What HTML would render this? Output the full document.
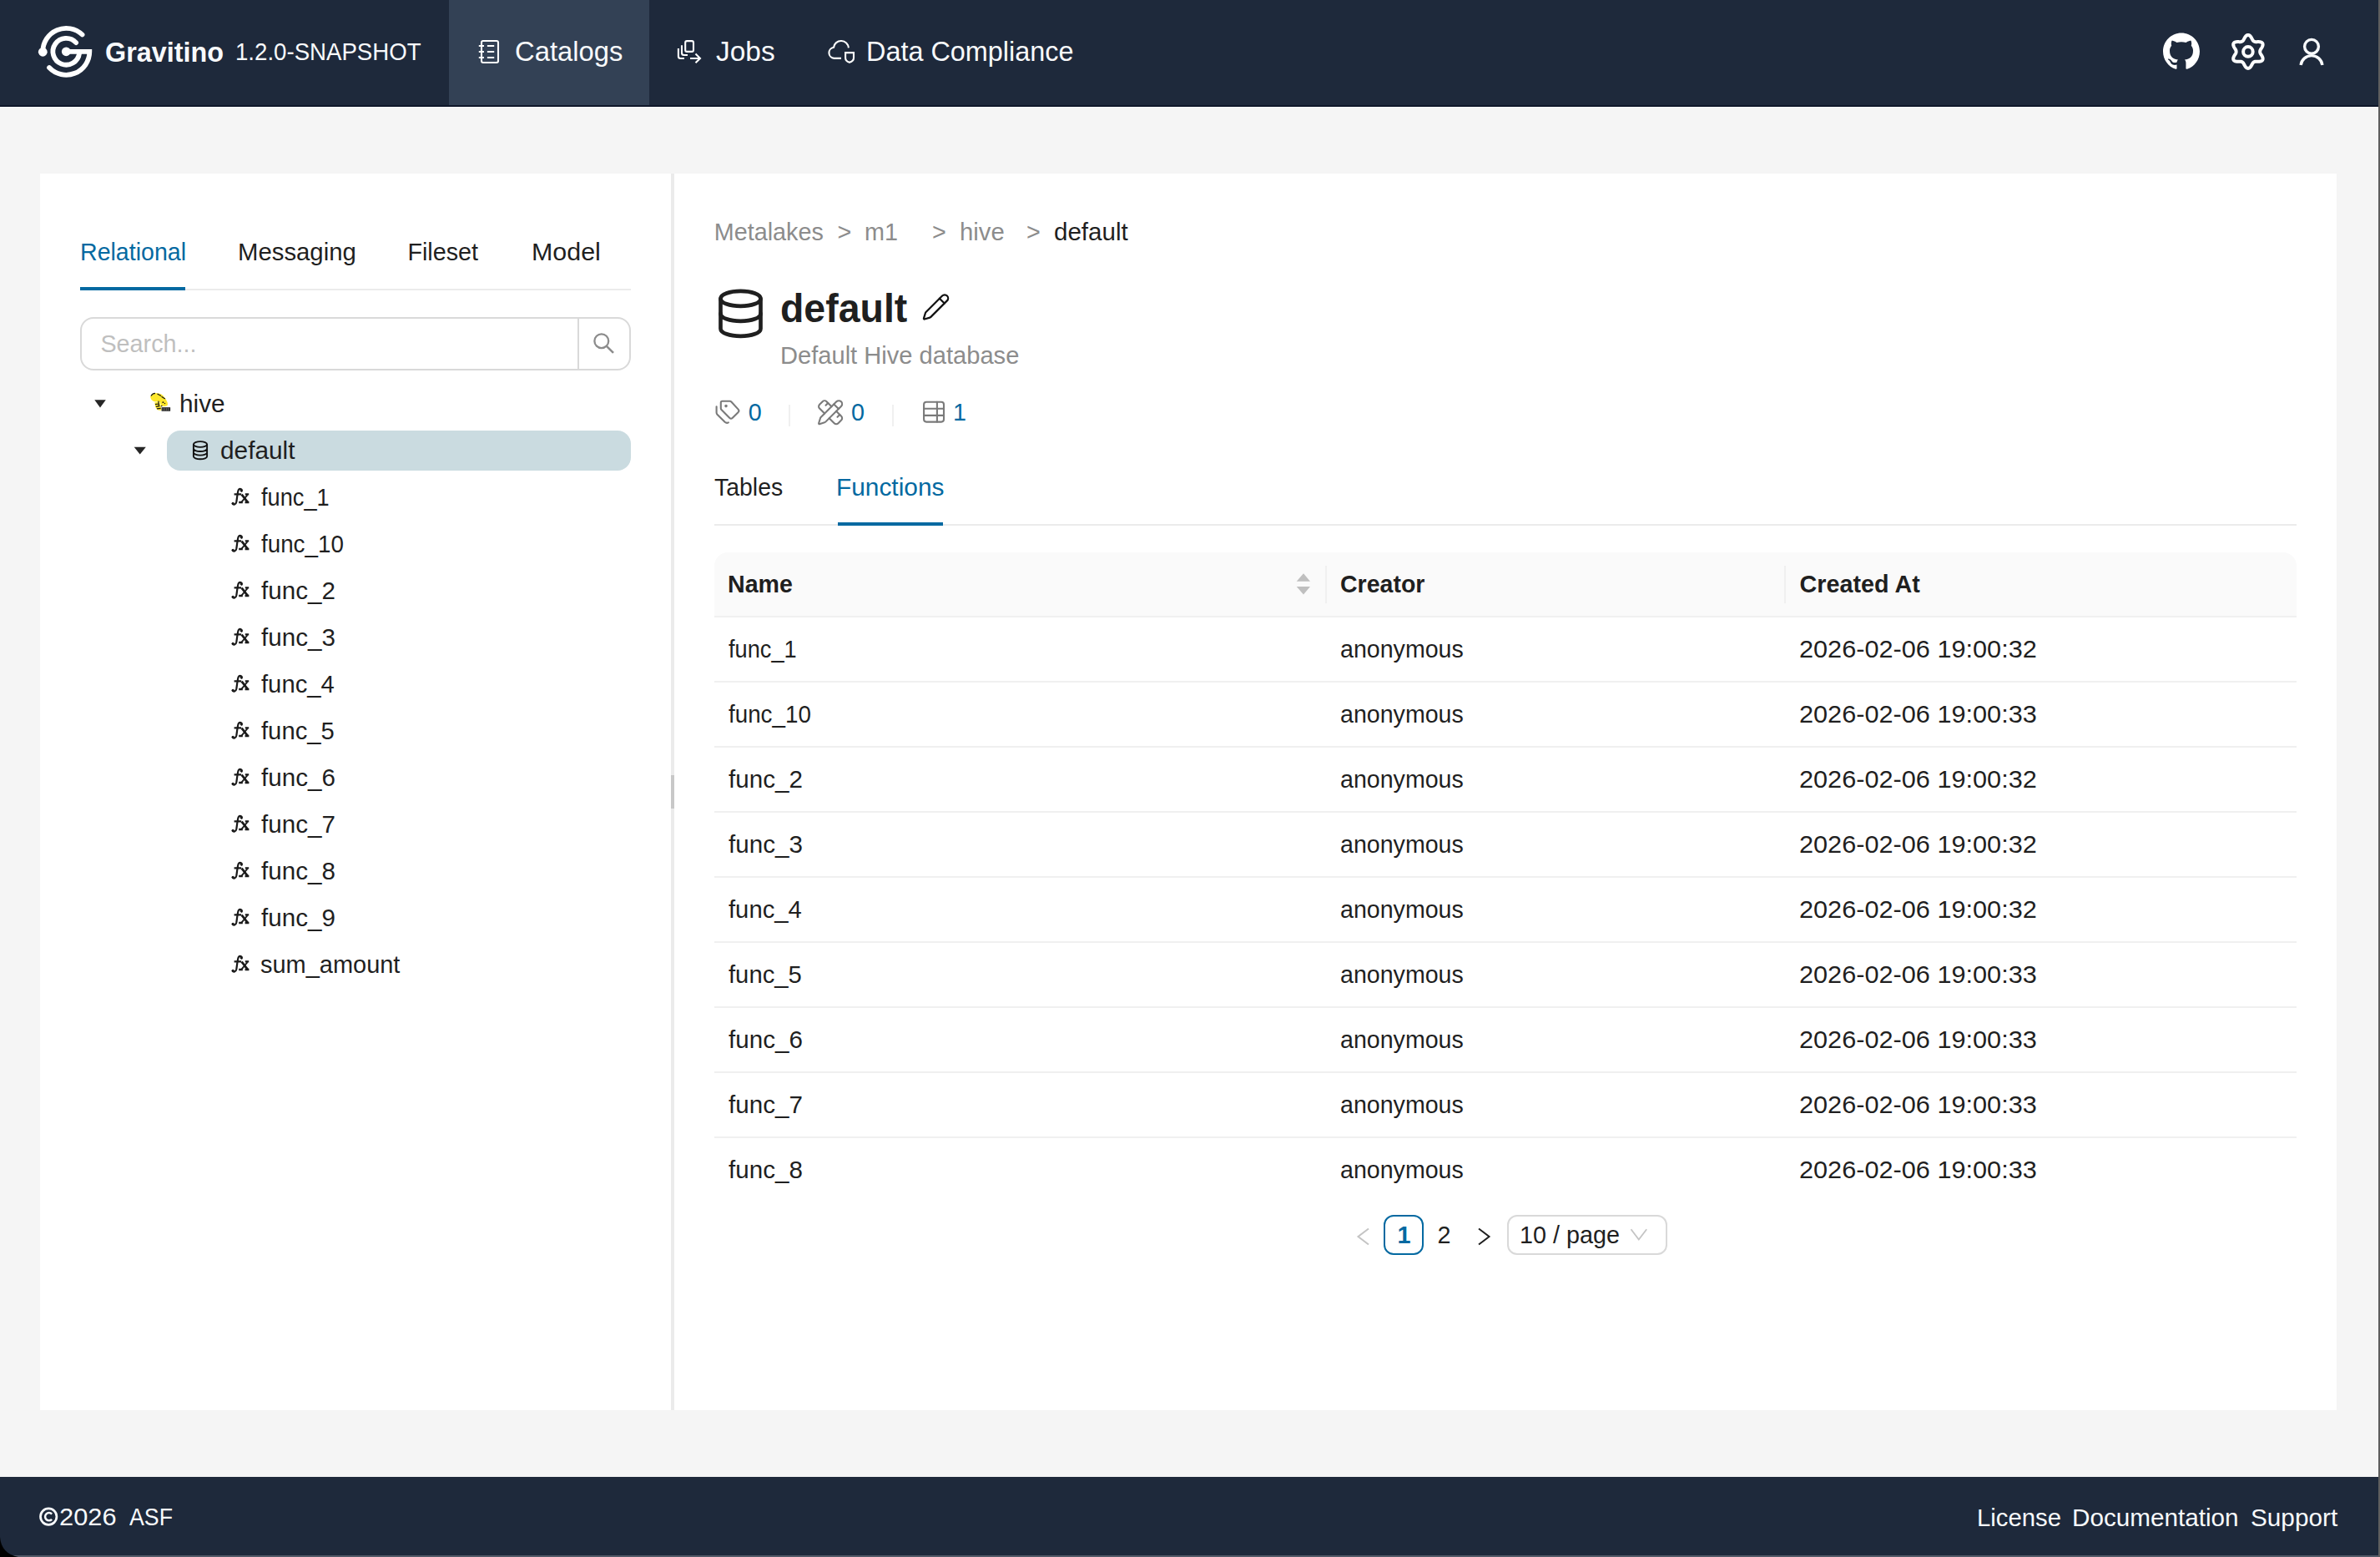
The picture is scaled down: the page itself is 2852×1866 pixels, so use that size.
<!DOCTYPE html>
<html><head><meta charset="utf-8"><style>
*{margin:0;padding:0;box-sizing:border-box}
html,body{width:2852px;height:1866px;overflow:hidden;background:#f5f5f5;font-family:"Liberation Sans",sans-serif}
.a{position:absolute}
.t{position:absolute;white-space:nowrap;line-height:1.117em;transform-origin:0 0}
svg{position:absolute;left:0;top:0}
@media (max-width:2000px){html{zoom:0.5}}
</style></head>
<body>
<div class="a" style="left:0px;top:0px;width:2852px;height:126px;background:#1e293b;"></div>
<div class="a" style="left:538px;top:0px;width:240px;height:126px;background:#334155;"></div>
<div class="a" style="left:0px;top:126px;width:2852px;height:2px;background:#0f172a;"></div>
<div class="a" style="left:0px;top:128px;width:2852px;height:1px;background:#fbfbfb;"></div>
<div class="a" style="left:48px;top:208px;width:2752px;height:1482px;background:#ffffff;"></div>
<div class="a" style="left:804px;top:208px;width:4px;height:1482px;background:#ebebeb;"></div>
<div class="a" style="left:804px;top:929px;width:4px;height:40px;background:#c8c8c8;"></div>
<div class="a" style="left:96px;top:346px;width:660px;height:2px;background:#ebebeb;"></div>
<div class="a" style="left:96px;top:344px;width:126px;height:4px;background:#0369a1;"></div>
<div class="a" style="left:96px;top:380px;width:660px;height:64px;background:#fff;border:2px solid #d9d9d9;border-radius:16px"></div>
<div class="a" style="left:692px;top:380px;width:2px;height:64px;background:#d9d9d9;"></div>
<div class="a" style="left:200px;top:516px;width:556px;height:48px;background:#cadbe0;border-radius:16px"></div>
<div class="a" style="left:856px;top:628px;width:1896px;height:2px;background:#ebebeb;"></div>
<div class="a" style="left:1004px;top:626px;width:126px;height:4px;background:#0369a1;"></div>
<div class="a" style="left:945px;top:485px;width:2px;height:26px;background:#f0f0f0;"></div>
<div class="a" style="left:1069px;top:485px;width:2px;height:26px;background:#f0f0f0;"></div>
<div class="a" style="left:856px;top:662px;width:1896px;height:76px;background:#fafafa;border-radius:16px 16px 0 0"></div>
<div class="a" style="left:856px;top:738px;width:1896px;height:2px;background:#f0f0f0;"></div>
<div class="a" style="left:1588px;top:678px;width:2px;height:45px;background:#f0f0f0;"></div>
<div class="a" style="left:2138px;top:678px;width:2px;height:45px;background:#f0f0f0;"></div>
<div class="a" style="left:856px;top:816px;width:1896px;height:2px;background:#f0f0f0;"></div>
<div class="a" style="left:856px;top:894px;width:1896px;height:2px;background:#f0f0f0;"></div>
<div class="a" style="left:856px;top:972px;width:1896px;height:2px;background:#f0f0f0;"></div>
<div class="a" style="left:856px;top:1050px;width:1896px;height:2px;background:#f0f0f0;"></div>
<div class="a" style="left:856px;top:1128px;width:1896px;height:2px;background:#f0f0f0;"></div>
<div class="a" style="left:856px;top:1206px;width:1896px;height:2px;background:#f0f0f0;"></div>
<div class="a" style="left:856px;top:1284px;width:1896px;height:2px;background:#f0f0f0;"></div>
<div class="a" style="left:856px;top:1362px;width:1896px;height:2px;background:#f0f0f0;"></div>
<div class="a" style="left:1658px;top:1456px;width:48px;height:48px;background:#fff;border:2px solid #0369a1;border-radius:12px"></div>
<div class="a" style="left:1806px;top:1456px;width:192px;height:48px;background:#fff;border:2px solid #d9d9d9;border-radius:12px"></div>
<div class="a" style="left:0px;top:1770px;width:2852px;height:96px;background:#1e293b;"></div>
<div class="a" style="left:0px;top:1864px;width:2852px;height:2px;background:#535a68;"></div>
<div class="a" style="left:2850px;top:0px;width:2px;height:1866px;background:#5e5e5e;"></div>
<div class="t" style="left:126.22px;top:44.56px;font-size:32.75px;color:#f8fafc;transform:scaleX(0.9877);font-weight:700">Gravitino</div>
<div class="t" style="left:281.89px;top:45.98px;font-size:28.75px;color:#f8fafc;transform:scaleX(0.9609)">1.2.0-SNAPSHOT</div>
<div class="t" style="left:617.11px;top:44.46px;font-size:32.75px;color:#f8fafc">Catalogs</div>
<div class="t" style="left:857.69px;top:44.46px;font-size:32.75px;color:#f8fafc;transform:scaleX(1.0215)">Jobs</div>
<div class="t" style="left:1038.05px;top:44.46px;font-size:32.75px;color:#f8fafc;transform:scaleX(0.9892)">Data Compliance</div>
<div class="t" style="left:95.63px;top:285.98px;font-size:28.75px;color:#0369a1;transform:scaleX(0.9934)">Relational</div>
<div class="t" style="left:284.68px;top:285.98px;font-size:28.75px;color:#1f1f1f;transform:scaleX(1.0197)">Messaging</div>
<div class="t" style="left:488.41px;top:285.98px;font-size:28.75px;color:#1f1f1f">Fileset</div>
<div class="t" style="left:637.10px;top:285.98px;font-size:28.75px;color:#1f1f1f;transform:scaleX(1.0578)">Model</div>
<div class="t" style="left:120.41px;top:396.18px;font-size:28.75px;color:#bfbfbf">Search...</div>
<div class="t" style="left:214.95px;top:467.98px;font-size:28.75px;color:#1f1f1f;transform:scaleX(1.0348)">hive</div>
<div class="t" style="left:263.97px;top:523.98px;font-size:28.75px;color:#1f1f1f;transform:scaleX(1.0361)">default</div>
<div class="t" style="left:313.00px;top:579.98px;font-size:28.75px;color:#1f1f1f;transform:scaleX(0.9458)">func_1</div>
<div class="t" style="left:313.00px;top:635.98px;font-size:28.75px;color:#1f1f1f;transform:scaleX(0.9660)">func_10</div>
<div class="t" style="left:313.00px;top:691.98px;font-size:28.75px;color:#1f1f1f;transform:scaleX(1.0291)">func_2</div>
<div class="t" style="left:313.00px;top:747.98px;font-size:28.75px;color:#1f1f1f;transform:scaleX(1.0291)">func_3</div>
<div class="t" style="left:313.00px;top:803.98px;font-size:28.75px;color:#1f1f1f;transform:scaleX(1.0168)">func_4</div>
<div class="t" style="left:313.00px;top:859.98px;font-size:28.75px;color:#1f1f1f;transform:scaleX(1.0168)">func_5</div>
<div class="t" style="left:313.00px;top:915.98px;font-size:28.75px;color:#1f1f1f;transform:scaleX(1.0291)">func_6</div>
<div class="t" style="left:313.00px;top:971.98px;font-size:28.75px;color:#1f1f1f;transform:scaleX(1.0291)">func_7</div>
<div class="t" style="left:313.00px;top:1027.98px;font-size:28.75px;color:#1f1f1f;transform:scaleX(1.0291)">func_8</div>
<div class="t" style="left:313.00px;top:1083.98px;font-size:28.75px;color:#1f1f1f;transform:scaleX(1.0291)">func_9</div>
<div class="t" style="left:312.00px;top:1139.98px;font-size:28.75px;color:#1f1f1f;transform:scaleX(1.0072)">sum_amount</div>
<div class="t" style="left:855.82px;top:261.78px;font-size:28.75px;color:#8c8c8c">Metalakes</div>
<div class="t" style="left:1003.41px;top:261.78px;font-size:28.75px;color:#8c8c8c">&gt;</div>
<div class="t" style="left:1036.01px;top:261.78px;font-size:28.75px;color:#8c8c8c">m1</div>
<div class="t" style="left:1116.91px;top:261.78px;font-size:28.75px;color:#8c8c8c">&gt;</div>
<div class="t" style="left:1149.68px;top:261.78px;font-size:28.75px;color:#8c8c8c;transform:scaleX(1.0186)">hive</div>
<div class="t" style="left:1230.01px;top:261.78px;font-size:28.75px;color:#8c8c8c">&gt;</div>
<div class="t" style="left:1263.48px;top:261.78px;font-size:28.75px;color:#1f1f1f;transform:scaleX(1.0279)">default</div>
<div class="t" style="left:935.06px;top:342.71px;font-size:47.5px;color:#1f1f1f;transform:scaleX(0.9779);font-weight:700">default</div>
<div class="t" style="left:934.99px;top:409.98px;font-size:28.75px;color:#8c8c8c;transform:scaleX(1.0122)">Default Hive database</div>
<div class="t" style="left:896.71px;top:477.98px;font-size:28.75px;color:#0369a1">0</div>
<div class="t" style="left:1020.11px;top:477.98px;font-size:28.75px;color:#0369a1">0</div>
<div class="t" style="left:1142.01px;top:477.78px;font-size:28.75px;color:#0369a1">1</div>
<div class="t" style="left:855.82px;top:568.48px;font-size:28.75px;color:#1f1f1f;transform:scaleX(0.9885)">Tables</div>
<div class="t" style="left:1001.94px;top:568.48px;font-size:28.75px;color:#0369a1;transform:scaleX(1.0383)">Functions</div>
<div class="t" style="left:871.93px;top:683.88px;font-size:28.75px;color:#1f1f1f;transform:scaleX(0.9950);font-weight:700">Name</div>
<div class="t" style="left:1606.22px;top:683.88px;font-size:28.75px;color:#1f1f1f;transform:scaleX(0.9916);font-weight:700">Creator</div>
<div class="t" style="left:2156.51px;top:683.88px;font-size:28.75px;color:#1f1f1f;font-weight:700">Created At</div>
<div class="t" style="left:872.60px;top:761.58px;font-size:28.75px;color:#1f1f1f;transform:scaleX(0.9458)">func_1</div>
<div class="t" style="left:1606.21px;top:761.58px;font-size:28.75px;color:#1f1f1f;transform:scaleX(0.9943)">anonymous</div>
<div class="t" style="left:2156.44px;top:761.58px;font-size:28.75px;color:#1f1f1f;transform:scaleX(1.0668)">2026-02-06 19:00:32</div>
<div class="t" style="left:872.60px;top:839.58px;font-size:28.75px;color:#1f1f1f;transform:scaleX(0.9660)">func_10</div>
<div class="t" style="left:1606.21px;top:839.58px;font-size:28.75px;color:#1f1f1f;transform:scaleX(0.9943)">anonymous</div>
<div class="t" style="left:2156.44px;top:839.58px;font-size:28.75px;color:#1f1f1f;transform:scaleX(1.0668)">2026-02-06 19:00:33</div>
<div class="t" style="left:872.60px;top:917.58px;font-size:28.75px;color:#1f1f1f;transform:scaleX(1.0291)">func_2</div>
<div class="t" style="left:1606.21px;top:917.58px;font-size:28.75px;color:#1f1f1f;transform:scaleX(0.9943)">anonymous</div>
<div class="t" style="left:2156.44px;top:917.58px;font-size:28.75px;color:#1f1f1f;transform:scaleX(1.0668)">2026-02-06 19:00:32</div>
<div class="t" style="left:872.60px;top:995.58px;font-size:28.75px;color:#1f1f1f;transform:scaleX(1.0291)">func_3</div>
<div class="t" style="left:1606.21px;top:995.58px;font-size:28.75px;color:#1f1f1f;transform:scaleX(0.9943)">anonymous</div>
<div class="t" style="left:2156.44px;top:995.58px;font-size:28.75px;color:#1f1f1f;transform:scaleX(1.0668)">2026-02-06 19:00:32</div>
<div class="t" style="left:872.60px;top:1073.58px;font-size:28.75px;color:#1f1f1f;transform:scaleX(1.0168)">func_4</div>
<div class="t" style="left:1606.21px;top:1073.58px;font-size:28.75px;color:#1f1f1f;transform:scaleX(0.9943)">anonymous</div>
<div class="t" style="left:2156.44px;top:1073.58px;font-size:28.75px;color:#1f1f1f;transform:scaleX(1.0668)">2026-02-06 19:00:32</div>
<div class="t" style="left:872.60px;top:1151.58px;font-size:28.75px;color:#1f1f1f;transform:scaleX(1.0168)">func_5</div>
<div class="t" style="left:1606.21px;top:1151.58px;font-size:28.75px;color:#1f1f1f;transform:scaleX(0.9943)">anonymous</div>
<div class="t" style="left:2156.44px;top:1151.58px;font-size:28.75px;color:#1f1f1f;transform:scaleX(1.0668)">2026-02-06 19:00:33</div>
<div class="t" style="left:872.60px;top:1229.58px;font-size:28.75px;color:#1f1f1f;transform:scaleX(1.0291)">func_6</div>
<div class="t" style="left:1606.21px;top:1229.58px;font-size:28.75px;color:#1f1f1f;transform:scaleX(0.9943)">anonymous</div>
<div class="t" style="left:2156.44px;top:1229.58px;font-size:28.75px;color:#1f1f1f;transform:scaleX(1.0668)">2026-02-06 19:00:33</div>
<div class="t" style="left:872.60px;top:1307.58px;font-size:28.75px;color:#1f1f1f;transform:scaleX(1.0291)">func_7</div>
<div class="t" style="left:1606.21px;top:1307.58px;font-size:28.75px;color:#1f1f1f;transform:scaleX(0.9943)">anonymous</div>
<div class="t" style="left:2156.44px;top:1307.58px;font-size:28.75px;color:#1f1f1f;transform:scaleX(1.0668)">2026-02-06 19:00:33</div>
<div class="t" style="left:872.60px;top:1385.58px;font-size:28.75px;color:#1f1f1f;transform:scaleX(1.0291)">func_8</div>
<div class="t" style="left:1606.21px;top:1385.58px;font-size:28.75px;color:#1f1f1f;transform:scaleX(0.9943)">anonymous</div>
<div class="t" style="left:2156.44px;top:1385.58px;font-size:28.75px;color:#1f1f1f;transform:scaleX(1.0668)">2026-02-06 19:00:33</div>
<div class="t" style="left:1674.41px;top:1463.98px;font-size:28.75px;color:#0369a1;font-weight:700">1</div>
<div class="t" style="left:1722.41px;top:1463.98px;font-size:28.75px;color:#1f1f1f">2</div>
<div class="t" style="left:1821.12px;top:1464.08px;font-size:28.75px;color:#1f1f1f">10 / page</div>
<div class="t" style="left:71.04px;top:1802.08px;font-size:28.75px;color:#f8fafc;transform:scaleX(1.0713)">2026</div>
<div class="t" style="left:155.40px;top:1802.08px;font-size:28.75px;color:#f8fafc;transform:scaleX(0.9298)">ASF</div>
<div class="t" style="left:2368.68px;top:1802.58px;font-size:28.75px;color:#f8fafc;transform:scaleX(1.0189)">License</div>
<div class="t" style="left:2483.45px;top:1802.58px;font-size:28.75px;color:#f8fafc;transform:scaleX(1.0318)">Documentation</div>
<div class="t" style="left:2697.37px;top:1802.58px;font-size:28.75px;color:#f8fafc;transform:scaleX(1.0342)">Support</div>
<svg width="2852" height="1866" viewBox="0 0 2852 1866"><path d="M98.57 41.49 A28.0 28.0 0 0 0 51.30 61.80" fill="none" stroke="#fff" stroke-width="5.8" stroke-linecap="round"/><circle cx="51.3" cy="62.3" r="5.4" fill="#fff"/><path d="M58.99 81.07 A28.0 28.0 0 0 0 107.30 61.80 L79.3 61.8" fill="none" stroke="#fff" stroke-width="5.8" stroke-linecap="round" stroke-linejoin="miter"/><path d="M91.12 51.16 A15.9 15.9 0 1 0 95.05 64.01" fill="none" stroke="#fff" stroke-width="5.8" stroke-linecap="round"/><circle cx="79.3" cy="61.8" r="5.4" fill="#fff"/><rect x="577" y="49" width="20" height="26" rx="2" fill="none" stroke="#fff" stroke-width="2.1" stroke-linecap="butt"/><path d="M573.8 55H580M583.9 55H592.2" fill="none" stroke="#fff" stroke-width="2.1" stroke-linecap="butt"/><path d="M573.8 62H580M583.9 62H592.2" fill="none" stroke="#fff" stroke-width="2.1" stroke-linecap="butt"/><path d="M573.8 69H580M583.9 69H592.2" fill="none" stroke="#fff" stroke-width="2.1" stroke-linecap="butt"/><rect x="821.2" y="49.1" width="9.8" height="12.8" rx="2" fill="none" stroke="#fff" stroke-width="2.1" stroke-linecap="butt"/><path d="M817 54.2V63.5a2.5 2.5 0 0 0 2.5 2.5H824" fill="none" stroke="#fff" stroke-width="2.1" stroke-linecap="butt"/><path d="M812.9 58V67.5a2.5 2.5 0 0 0 2.5 2.5H820" fill="none" stroke="#fff" stroke-width="2.1" stroke-linecap="butt"/><path d="M827 70H839M833.5 64.6L839 70L833.5 75.3" fill="none" stroke="#fff" stroke-width="2.1" stroke-linecap="butt" stroke-linejoin="miter"/><path d="M1008 69.9H999.5a6.6 6.6 0 0 1 -0.5 -13.1A9 9 0 0 1 1016.9 57.3" fill="none" stroke="#fff" stroke-width="2.1" stroke-linecap="butt" stroke-linecap="butt"/><path d="M1013.1 63.1H1023V69.5Q1023 73.2 1018 74.8Q1013.1 73.2 1013.1 69.5Z" fill="none" stroke="#fff" stroke-width="2.1" stroke-linecap="butt" stroke-linejoin="miter"/><path transform="translate(2592 39.6) scale(0.4503)" d="M48.854 0C21.839 0 0 22 0 49.217c0 21.756 13.993 40.172 33.405 46.69 2.427.49 3.316-1.059 3.316-2.362 0-1.141-.08-5.052-.08-9.127-13.59 2.934-16.42-5.867-16.42-5.867-2.184-5.704-5.42-7.17-5.42-7.17-4.448-3.015.324-3.015.324-3.015 4.934.326 7.523 5.052 7.523 5.052 4.367 7.496 11.404 5.378 14.235 4.074.404-3.178 1.699-5.378 3.074-6.6-10.839-1.141-22.243-5.378-22.243-24.283 0-5.378 1.94-9.778 5.014-13.2-.485-1.222-2.184-6.275.486-13.038 0 0 4.125-1.304 13.426 5.052a46.97 46.97 0 0 1 12.214-1.63c4.125 0 8.33.571 12.213 1.63 9.302-6.356 13.427-5.052 13.427-5.052 2.67 6.763.97 11.816.485 13.038 3.155 3.422 5.015 7.822 5.015 13.2 0 18.905-11.404 23.06-22.324 24.283 1.78 1.548 3.316 4.481 3.316 9.126 0 6.6-.08 11.897-.08 13.526 0 1.304.89 2.853 3.316 2.364 19.412-6.52 33.405-24.935 33.405-46.691C97.707 22 75.788 0 48.854 0z" fill="#fff"/><path d="M2708.20 61.90 L2708.20 62.27 L2708.24 62.65 L2708.31 63.03 L2708.42 63.43 L2708.59 63.83 L2708.81 64.26 L2709.07 64.71 L2709.36 65.19 L2709.69 65.69 L2710.03 66.22 L2710.37 66.78 L2710.69 67.36 L2710.99 67.95 L2711.24 68.56 L2711.43 69.16 L2711.56 69.76 L2711.60 70.34 L2711.57 70.90 L2711.44 71.42 L2711.22 71.90 L2710.92 72.33 L2710.53 72.70 L2710.06 73.01 L2709.54 73.26 L2708.96 73.45 L2708.33 73.59 L2707.68 73.67 L2707.02 73.71 L2706.36 73.72 L2705.71 73.71 L2705.08 73.68 L2704.48 73.65 L2703.92 73.63 L2703.40 73.63 L2702.92 73.65 L2702.48 73.71 L2702.08 73.81 L2701.72 73.94 L2701.38 74.10 L2701.05 74.28 L2700.73 74.48 L2700.42 74.69 L2700.12 74.94 L2699.84 75.24 L2699.57 75.59 L2699.31 75.99 L2699.05 76.44 L2698.79 76.94 L2698.51 77.47 L2698.22 78.03 L2697.91 78.60 L2697.57 79.17 L2697.20 79.72 L2696.81 80.24 L2696.38 80.71 L2695.92 81.12 L2695.44 81.45 L2694.94 81.70 L2694.42 81.85 L2693.90 81.90 L2693.38 81.85 L2692.86 81.70 L2692.36 81.45 L2691.88 81.12 L2691.42 80.71 L2690.99 80.24 L2690.60 79.72 L2690.23 79.17 L2689.89 78.60 L2689.58 78.03 L2689.29 77.47 L2689.01 76.94 L2688.75 76.44 L2688.49 75.99 L2688.23 75.59 L2687.96 75.24 L2687.68 74.94 L2687.38 74.69 L2687.07 74.48 L2686.75 74.28 L2686.42 74.10 L2686.08 73.94 L2685.72 73.81 L2685.32 73.71 L2684.88 73.65 L2684.40 73.63 L2683.88 73.63 L2683.32 73.65 L2682.72 73.68 L2682.09 73.71 L2681.44 73.72 L2680.78 73.71 L2680.12 73.67 L2679.47 73.59 L2678.84 73.45 L2678.26 73.26 L2677.74 73.01 L2677.27 72.70 L2676.88 72.33 L2676.58 71.90 L2676.36 71.42 L2676.23 70.90 L2676.20 70.34 L2676.24 69.76 L2676.37 69.16 L2676.56 68.56 L2676.81 67.95 L2677.11 67.36 L2677.43 66.78 L2677.77 66.22 L2678.11 65.69 L2678.44 65.19 L2678.73 64.71 L2678.99 64.26 L2679.21 63.83 L2679.38 63.43 L2679.49 63.03 L2679.56 62.65 L2679.60 62.27 L2679.60 61.90 L2679.60 61.53 L2679.56 61.15 L2679.49 60.77 L2679.38 60.37 L2679.21 59.97 L2678.99 59.54 L2678.73 59.09 L2678.44 58.61 L2678.11 58.11 L2677.77 57.58 L2677.43 57.02 L2677.11 56.44 L2676.81 55.85 L2676.56 55.24 L2676.37 54.64 L2676.24 54.04 L2676.20 53.46 L2676.23 52.90 L2676.36 52.38 L2676.58 51.90 L2676.88 51.47 L2677.27 51.10 L2677.74 50.79 L2678.26 50.54 L2678.84 50.35 L2679.47 50.21 L2680.12 50.13 L2680.78 50.09 L2681.44 50.08 L2682.09 50.09 L2682.72 50.12 L2683.32 50.15 L2683.88 50.17 L2684.40 50.17 L2684.88 50.15 L2685.32 50.09 L2685.72 49.99 L2686.08 49.86 L2686.42 49.70 L2686.75 49.52 L2687.07 49.32 L2687.38 49.11 L2687.68 48.86 L2687.96 48.56 L2688.23 48.21 L2688.49 47.81 L2688.75 47.36 L2689.01 46.86 L2689.29 46.33 L2689.58 45.77 L2689.89 45.20 L2690.23 44.63 L2690.60 44.08 L2690.99 43.56 L2691.42 43.09 L2691.88 42.68 L2692.36 42.35 L2692.86 42.10 L2693.38 41.95 L2693.90 41.90 L2694.42 41.95 L2694.94 42.10 L2695.44 42.35 L2695.92 42.68 L2696.38 43.09 L2696.81 43.56 L2697.20 44.08 L2697.57 44.63 L2697.91 45.20 L2698.22 45.77 L2698.51 46.33 L2698.79 46.86 L2699.05 47.36 L2699.31 47.81 L2699.57 48.21 L2699.84 48.56 L2700.12 48.86 L2700.42 49.11 L2700.73 49.32 L2701.05 49.52 L2701.38 49.70 L2701.72 49.86 L2702.08 49.99 L2702.48 50.09 L2702.92 50.15 L2703.40 50.17 L2703.92 50.17 L2704.48 50.15 L2705.08 50.12 L2705.71 50.09 L2706.36 50.08 L2707.02 50.09 L2707.68 50.13 L2708.33 50.21 L2708.96 50.35 L2709.54 50.54 L2710.06 50.79 L2710.53 51.10 L2710.92 51.47 L2711.22 51.90 L2711.44 52.38 L2711.57 52.90 L2711.60 53.46 L2711.56 54.04 L2711.43 54.64 L2711.24 55.24 L2710.99 55.85 L2710.69 56.44 L2710.37 57.02 L2710.03 57.58 L2709.69 58.11 L2709.36 58.61 L2709.07 59.09 L2708.81 59.54 L2708.59 59.97 L2708.42 60.37 L2708.31 60.77 L2708.24 61.15 L2708.20 61.53 L2708.20 61.90Z" fill="none" stroke="#fff" stroke-width="4" stroke-linejoin="round"/><circle cx="2693.9" cy="61.9" r="5.8" fill="none" stroke="#fff" stroke-width="4"/><circle cx="2770" cy="55.8" r="8.4" fill="none" stroke="#f8fafc" stroke-width="3.4"/><path d="M2757.1 78A13 13 0 0 1 2782.9 78" fill="none" stroke="#f8fafc" stroke-width="3.4"/><circle cx="720.8" cy="408.7" r="8.4" fill="none" stroke="#8c8c8c" stroke-width="2.3"/><path d="M726.9 414.8L735 422.9" stroke="#8c8c8c" stroke-width="2.6"/><path d="M113.3 479.3H126.8L120 488.4Z" fill="#262626"/><path d="M160.7 535.8H174.8L167.7 544.5Z" fill="#262626"/><path d="M180.3 475 Q181.5 471 186 470.9 L190.5 471.4 Q193.5 472 195.5 474.2 L198.3 477.8 Q199.8 480.2 200.8 482.8 L200.9 485.6 Q199.8 487 197 486.9 L193.6 486.6 Q192.3 484.3 191.6 482 L188.8 481.6 Q186 481.6 184 481 Q180.8 479.6 180.3 476.5Z" fill="#fde72a"/><path d="M185.3 482.6 L190.6 481.8 Q192.6 485 193.2 488.3 L193.4 491.6 Q190.2 492.2 187.6 490.2 Q185.6 487.2 185.3 482.6Z" fill="#fde72a"/><path d="M181 474.6 Q182.3 471.5 186 471.3 M188.5 472 L193 474.5 M193.5 475.2 L197.8 478 M189.8 480.6 L190.6 487 M186 484.6 L189.8 484 M186.8 487.3 L191.3 486.6 M188 489.9 L192.6 489.3 M192.8 486.9 L194.5 486.3" stroke="#151515" stroke-width="1.2" fill="none"/><circle cx="195.4" cy="482.2" r="0.9" fill="#111"/><circle cx="197.5" cy="483.5" r="0.7" fill="#111"/><rect x="193.6" y="488.2" width="10.5" height="4.5" fill="#1a1a1a"/><path d="M195.3 489v3M197.6 489v3M199.8 489v3M202 489v3" stroke="#9a9a9a" stroke-width="0.7"/><ellipse cx="240" cy="532.5" rx="8.1" ry="3.4" fill="none" stroke="#111" stroke-width="1.9"/><path d="M231.9 532.5V546.9A8.1 3.4 0 0 0 248.1 546.9V532.5M231.9 537.6A8.1 3.4 0 0 0 248.1 537.6M231.9 542.2A8.1 3.4 0 0 0 248.1 542.2" fill="none" stroke="#111" stroke-width="1.9"/><g transform="translate(0 0)" fill="none" stroke="#1a1a1a" stroke-width="2.2" stroke-linecap="round"><path d="M289.6 588.6 C290.2 585.8 287 584.8 285.6 587.6 C284.6 590 284.2 596 283.3 601.5 C282.6 605 279.6 605.5 278.7 603.4"/><path d="M280.6 592.4H289.2M293.8 592.4H298.2" stroke-linecap="butt" stroke-width="2.3"/><path d="M289.6 592.6L296.8 601.8" stroke-width="2.7" stroke-linecap="butt"/><path d="M296.5 593.2L289.3 601.8" stroke-width="1.8" stroke-linecap="butt"/><path d="M286.2 602H290.8M293.6 602H298.4" stroke-linecap="butt" stroke-width="2.3"/><circle cx="289.2" cy="587.8" r="1.6" fill="#1a1a1a" stroke="none"/><circle cx="279.2" cy="603.4" r="1.6" fill="#1a1a1a" stroke="none"/></g><g transform="translate(0 56)" fill="none" stroke="#1a1a1a" stroke-width="2.2" stroke-linecap="round"><path d="M289.6 588.6 C290.2 585.8 287 584.8 285.6 587.6 C284.6 590 284.2 596 283.3 601.5 C282.6 605 279.6 605.5 278.7 603.4"/><path d="M280.6 592.4H289.2M293.8 592.4H298.2" stroke-linecap="butt" stroke-width="2.3"/><path d="M289.6 592.6L296.8 601.8" stroke-width="2.7" stroke-linecap="butt"/><path d="M296.5 593.2L289.3 601.8" stroke-width="1.8" stroke-linecap="butt"/><path d="M286.2 602H290.8M293.6 602H298.4" stroke-linecap="butt" stroke-width="2.3"/><circle cx="289.2" cy="587.8" r="1.6" fill="#1a1a1a" stroke="none"/><circle cx="279.2" cy="603.4" r="1.6" fill="#1a1a1a" stroke="none"/></g><g transform="translate(0 112)" fill="none" stroke="#1a1a1a" stroke-width="2.2" stroke-linecap="round"><path d="M289.6 588.6 C290.2 585.8 287 584.8 285.6 587.6 C284.6 590 284.2 596 283.3 601.5 C282.6 605 279.6 605.5 278.7 603.4"/><path d="M280.6 592.4H289.2M293.8 592.4H298.2" stroke-linecap="butt" stroke-width="2.3"/><path d="M289.6 592.6L296.8 601.8" stroke-width="2.7" stroke-linecap="butt"/><path d="M296.5 593.2L289.3 601.8" stroke-width="1.8" stroke-linecap="butt"/><path d="M286.2 602H290.8M293.6 602H298.4" stroke-linecap="butt" stroke-width="2.3"/><circle cx="289.2" cy="587.8" r="1.6" fill="#1a1a1a" stroke="none"/><circle cx="279.2" cy="603.4" r="1.6" fill="#1a1a1a" stroke="none"/></g><g transform="translate(0 168)" fill="none" stroke="#1a1a1a" stroke-width="2.2" stroke-linecap="round"><path d="M289.6 588.6 C290.2 585.8 287 584.8 285.6 587.6 C284.6 590 284.2 596 283.3 601.5 C282.6 605 279.6 605.5 278.7 603.4"/><path d="M280.6 592.4H289.2M293.8 592.4H298.2" stroke-linecap="butt" stroke-width="2.3"/><path d="M289.6 592.6L296.8 601.8" stroke-width="2.7" stroke-linecap="butt"/><path d="M296.5 593.2L289.3 601.8" stroke-width="1.8" stroke-linecap="butt"/><path d="M286.2 602H290.8M293.6 602H298.4" stroke-linecap="butt" stroke-width="2.3"/><circle cx="289.2" cy="587.8" r="1.6" fill="#1a1a1a" stroke="none"/><circle cx="279.2" cy="603.4" r="1.6" fill="#1a1a1a" stroke="none"/></g><g transform="translate(0 224)" fill="none" stroke="#1a1a1a" stroke-width="2.2" stroke-linecap="round"><path d="M289.6 588.6 C290.2 585.8 287 584.8 285.6 587.6 C284.6 590 284.2 596 283.3 601.5 C282.6 605 279.6 605.5 278.7 603.4"/><path d="M280.6 592.4H289.2M293.8 592.4H298.2" stroke-linecap="butt" stroke-width="2.3"/><path d="M289.6 592.6L296.8 601.8" stroke-width="2.7" stroke-linecap="butt"/><path d="M296.5 593.2L289.3 601.8" stroke-width="1.8" stroke-linecap="butt"/><path d="M286.2 602H290.8M293.6 602H298.4" stroke-linecap="butt" stroke-width="2.3"/><circle cx="289.2" cy="587.8" r="1.6" fill="#1a1a1a" stroke="none"/><circle cx="279.2" cy="603.4" r="1.6" fill="#1a1a1a" stroke="none"/></g><g transform="translate(0 280)" fill="none" stroke="#1a1a1a" stroke-width="2.2" stroke-linecap="round"><path d="M289.6 588.6 C290.2 585.8 287 584.8 285.6 587.6 C284.6 590 284.2 596 283.3 601.5 C282.6 605 279.6 605.5 278.7 603.4"/><path d="M280.6 592.4H289.2M293.8 592.4H298.2" stroke-linecap="butt" stroke-width="2.3"/><path d="M289.6 592.6L296.8 601.8" stroke-width="2.7" stroke-linecap="butt"/><path d="M296.5 593.2L289.3 601.8" stroke-width="1.8" stroke-linecap="butt"/><path d="M286.2 602H290.8M293.6 602H298.4" stroke-linecap="butt" stroke-width="2.3"/><circle cx="289.2" cy="587.8" r="1.6" fill="#1a1a1a" stroke="none"/><circle cx="279.2" cy="603.4" r="1.6" fill="#1a1a1a" stroke="none"/></g><g transform="translate(0 336)" fill="none" stroke="#1a1a1a" stroke-width="2.2" stroke-linecap="round"><path d="M289.6 588.6 C290.2 585.8 287 584.8 285.6 587.6 C284.6 590 284.2 596 283.3 601.5 C282.6 605 279.6 605.5 278.7 603.4"/><path d="M280.6 592.4H289.2M293.8 592.4H298.2" stroke-linecap="butt" stroke-width="2.3"/><path d="M289.6 592.6L296.8 601.8" stroke-width="2.7" stroke-linecap="butt"/><path d="M296.5 593.2L289.3 601.8" stroke-width="1.8" stroke-linecap="butt"/><path d="M286.2 602H290.8M293.6 602H298.4" stroke-linecap="butt" stroke-width="2.3"/><circle cx="289.2" cy="587.8" r="1.6" fill="#1a1a1a" stroke="none"/><circle cx="279.2" cy="603.4" r="1.6" fill="#1a1a1a" stroke="none"/></g><g transform="translate(0 392)" fill="none" stroke="#1a1a1a" stroke-width="2.2" stroke-linecap="round"><path d="M289.6 588.6 C290.2 585.8 287 584.8 285.6 587.6 C284.6 590 284.2 596 283.3 601.5 C282.6 605 279.6 605.5 278.7 603.4"/><path d="M280.6 592.4H289.2M293.8 592.4H298.2" stroke-linecap="butt" stroke-width="2.3"/><path d="M289.6 592.6L296.8 601.8" stroke-width="2.7" stroke-linecap="butt"/><path d="M296.5 593.2L289.3 601.8" stroke-width="1.8" stroke-linecap="butt"/><path d="M286.2 602H290.8M293.6 602H298.4" stroke-linecap="butt" stroke-width="2.3"/><circle cx="289.2" cy="587.8" r="1.6" fill="#1a1a1a" stroke="none"/><circle cx="279.2" cy="603.4" r="1.6" fill="#1a1a1a" stroke="none"/></g><g transform="translate(0 448)" fill="none" stroke="#1a1a1a" stroke-width="2.2" stroke-linecap="round"><path d="M289.6 588.6 C290.2 585.8 287 584.8 285.6 587.6 C284.6 590 284.2 596 283.3 601.5 C282.6 605 279.6 605.5 278.7 603.4"/><path d="M280.6 592.4H289.2M293.8 592.4H298.2" stroke-linecap="butt" stroke-width="2.3"/><path d="M289.6 592.6L296.8 601.8" stroke-width="2.7" stroke-linecap="butt"/><path d="M296.5 593.2L289.3 601.8" stroke-width="1.8" stroke-linecap="butt"/><path d="M286.2 602H290.8M293.6 602H298.4" stroke-linecap="butt" stroke-width="2.3"/><circle cx="289.2" cy="587.8" r="1.6" fill="#1a1a1a" stroke="none"/><circle cx="279.2" cy="603.4" r="1.6" fill="#1a1a1a" stroke="none"/></g><g transform="translate(0 504)" fill="none" stroke="#1a1a1a" stroke-width="2.2" stroke-linecap="round"><path d="M289.6 588.6 C290.2 585.8 287 584.8 285.6 587.6 C284.6 590 284.2 596 283.3 601.5 C282.6 605 279.6 605.5 278.7 603.4"/><path d="M280.6 592.4H289.2M293.8 592.4H298.2" stroke-linecap="butt" stroke-width="2.3"/><path d="M289.6 592.6L296.8 601.8" stroke-width="2.7" stroke-linecap="butt"/><path d="M296.5 593.2L289.3 601.8" stroke-width="1.8" stroke-linecap="butt"/><path d="M286.2 602H290.8M293.6 602H298.4" stroke-linecap="butt" stroke-width="2.3"/><circle cx="289.2" cy="587.8" r="1.6" fill="#1a1a1a" stroke="none"/><circle cx="279.2" cy="603.4" r="1.6" fill="#1a1a1a" stroke="none"/></g><g transform="translate(0 560)" fill="none" stroke="#1a1a1a" stroke-width="2.2" stroke-linecap="round"><path d="M289.6 588.6 C290.2 585.8 287 584.8 285.6 587.6 C284.6 590 284.2 596 283.3 601.5 C282.6 605 279.6 605.5 278.7 603.4"/><path d="M280.6 592.4H289.2M293.8 592.4H298.2" stroke-linecap="butt" stroke-width="2.3"/><path d="M289.6 592.6L296.8 601.8" stroke-width="2.7" stroke-linecap="butt"/><path d="M296.5 593.2L289.3 601.8" stroke-width="1.8" stroke-linecap="butt"/><path d="M286.2 602H290.8M293.6 602H298.4" stroke-linecap="butt" stroke-width="2.3"/><circle cx="289.2" cy="587.8" r="1.6" fill="#1a1a1a" stroke="none"/><circle cx="279.2" cy="603.4" r="1.6" fill="#1a1a1a" stroke="none"/></g><g transform="translate(851.5 339.9) scale(3)" fill="none" stroke="#1f1f1f" stroke-width="1.55" stroke-linecap="round" stroke-linejoin="round"><path d="M12 6m-8 0a8 3 0 1 0 16 0a8 3 0 1 0 -16 0"/><path d="M4 6v6a8 3 0 0 0 16 0v-6"/><path d="M4 12v6a8 3 0 0 0 16 0v-6"/></g><g transform="translate(1104.0 350.4) scale(1.46)" fill="none" stroke="#111" stroke-width="1.55" stroke-linecap="round" stroke-linejoin="round"><path d="M21.174 6.812a1 1 0 0 0-3.986-3.987L3.842 16.174a2 2 0 0 0-.5.83l-1.321 4.352a.5.5 0 0 0 .623.622l4.353-1.32a2 2 0 0 0 .83-.497z"/><path d="m15 5 4 4"/></g><path d="M865.5 480.8H874.6Q875.6 480.8 876.3 481.5L884.7 490.6Q886.2 492.3 884.7 493.9L877.6 500.9Q876 502.4 874.4 500.9L864.5 491.1Q863.8 490.4 863.8 489.3V482.5Q863.8 480.8 865.5 480.8Z" fill="none" stroke="#7a7a7a" stroke-width="2.1" stroke-linecap="round" stroke-linejoin="round"/><circle cx="870" cy="486.6" r="1.1" fill="#7a7a7a" stroke="#7a7a7a" stroke-width="1.4"/><path d="M858.6 487.3V494.6Q858.6 495.8 859.5 496.7L868.6 505.8Q870.6 507.6 872.9 506.4" fill="none" stroke="#7a7a7a" stroke-width="2.1" stroke-linecap="round" stroke-linejoin="round"/><g transform="translate(978.3 477.4) scale(1.4)" fill="none" stroke="#7a7a7a" stroke-width="1.5" stroke-linecap="round" stroke-linejoin="round"><path d="M13 7 8.7 2.7a2.41 2.41 0 0 0-3.4 0L2.7 5.3a2.41 2.41 0 0 0 0 3.4L7 13"/><path d="m8 6 2-2"/><path d="m18 16 2-2"/><path d="m17 11 4.3 4.3c.94.94.94 2.46 0 3.4l-2.6 2.6c-.94.94-2.46.94-3.4 0L11 17"/><path d="M21.174 6.812a1 1 0 0 0-3.986-3.987L3.842 16.174a2 2 0 0 0-.5.83l-1.321 4.352a.5.5 0 0 0 .623.622l4.353-1.32a2 2 0 0 0 .83-.497z"/><path d="m15 5 4 4"/></g><rect x="1107.1" y="481.8" width="23.9" height="23.8" rx="3" fill="none" stroke="#7a7a7a" stroke-width="2.1" stroke-linecap="round" stroke-linejoin="round"/><path d="M1107.1 489.8H1131M1107.1 497.9H1131M1122.9 481.8V505.6" fill="none" stroke="#7a7a7a" stroke-width="2.1" stroke-linecap="round" stroke-linejoin="round"/><path d="M1562 687.2L1570 696.8H1553.7Z M1553.7 703.1H1570L1562 712.6Z" fill="#bfbfbf"/><path d="M1640 1472.5L1627.5 1482L1640 1491.5" fill="none" stroke="#c4c4c4" stroke-width="2"/><path d="M1772 1472.5L1784.5 1482L1772 1491.5" fill="none" stroke="#1f1f1f" stroke-width="2"/><path d="M1954.5 1473.2L1963.8 1485.5L1973.2 1473.2" fill="none" stroke="#c4c4c4" stroke-width="1.8"/><circle cx="58.2" cy="1817.6" r="9.7" fill="none" stroke="#f8fafc" stroke-width="2.7"/><path d="M62.1 1814.6A4.6 4.6 0 1 0 62.1 1820.8" fill="none" stroke="#f8fafc" stroke-width="2.5"/><path d="M0 1842 Q1.5 1862 22 1866 H0Z" fill="#000"/></svg>
</body></html>
